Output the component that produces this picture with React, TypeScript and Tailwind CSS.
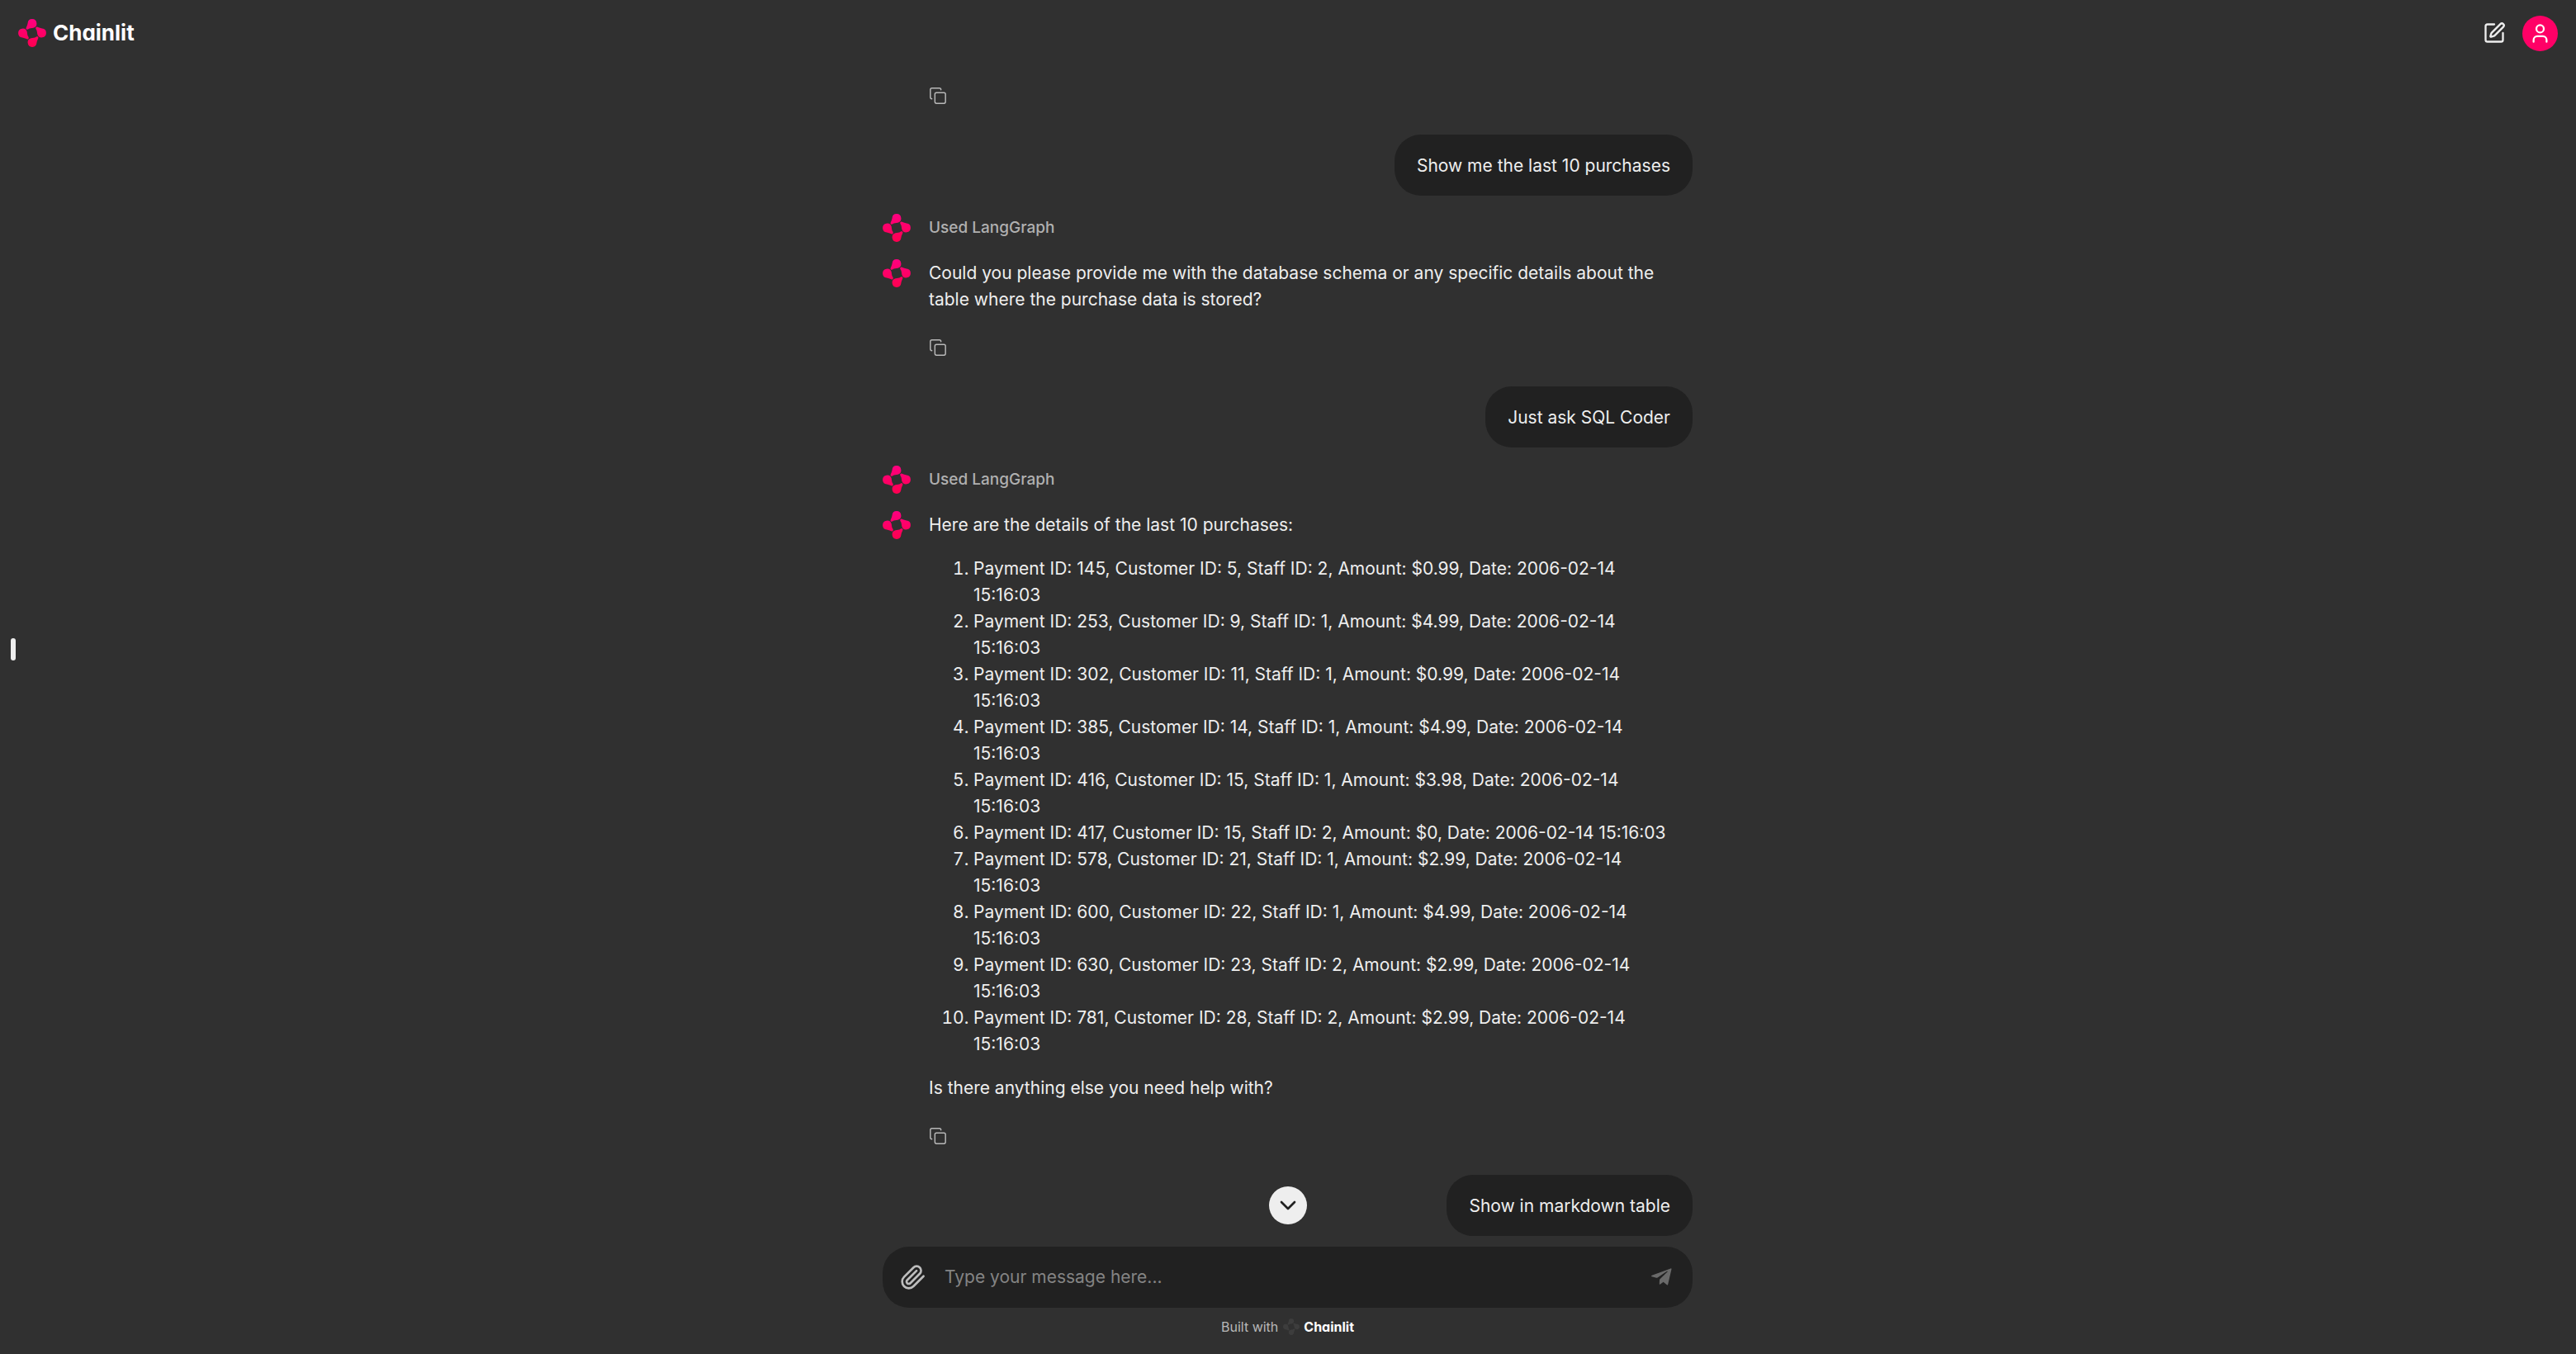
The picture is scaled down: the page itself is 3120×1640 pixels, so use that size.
import type { ReactNode } from 'react';
import { ChevronDown, Copy, SquarePen, User } from 'lucide-react';

const petal = 'M12.4 12.3 C11.2 13.3 9.2 12.6 9.6 11 C10 9.6 11.3 7.6 11.6 5 A5.4 5.4 0 1 1 18.4 10.7 C16.2 11.2 14 11 12.4 12.3 Z';

function Mark({ className, id, muted = false }: { className: string; id: string; muted?: boolean }) {
  return (
    <svg viewBox="0 0 34 34" className={className} aria-hidden="true">
      <defs>
        <linearGradient id={id} x1="0" y1="0" x2="0" y2="34" gradientUnits="userSpaceOnUse">
          <stop offset="0" stopColor={muted ? '#3d3d3d' : '#ff0080'} />
          <stop offset="1" stopColor={muted ? '#3d3d3d' : '#ff0050'} />
        </linearGradient>
        <mask id={id + '-m'}>
          <g fill="#fff">
            <path d={petal} />
            <path d={petal} transform="rotate(90 17 17)" />
            <path d={petal} transform="rotate(180 17 17)" />
            <path d={petal} transform="rotate(270 17 17)" />
          </g>
        </mask>
      </defs>
      <rect width="34" height="34" fill={`url(#${id})`} mask={`url(#${id}-m)`} />
    </svg>
  );
}

function UserMessage({ text }: { text: string }) {
  return (
    <div className="flex justify-end">
      <p className="rounded-[32px] bg-[#212121] px-[27px] pt-[22px] pb-5">{text}</p>
    </div>
  );
}

function Step({ id }: { id: string }) {
  return (
    <div className="mt-[22px] flex h-[34px] items-center gap-[22px]">
      <Mark id={id} className="size-[34px]" />
      <button className="text-[19px] leading-[28px] font-medium text-[#b0b0b0]">Used LangGraph</button>
    </div>
  );
}

function CopyButton() {
  return (
    <button aria-label="Copy" className="block text-[#b8b8b8]">
      <Copy className="size-[22px]" strokeWidth={1.6} />
    </button>
  );
}

function Reply({ id, children }: { id: string; children: ReactNode }) {
  return (
    <div className="mt-[21px] flex gap-[22px]">
      <Mark id={id} className="size-[34px] shrink-0" />
      <div className="min-w-0 flex-1 pt-px">
        <div className="flex flex-col gap-[21px]">{children}</div>
        <div className="mt-[31px] mb-[36px]">
          <CopyButton />
        </div>
      </div>
    </div>
  );
}

const payments = [
  { id: 145, customer: 5, staff: 2, amount: '0.99' },
  { id: 253, customer: 9, staff: 1, amount: '4.99' },
  { id: 302, customer: 11, staff: 1, amount: '0.99' },
  { id: 385, customer: 14, staff: 1, amount: '4.99' },
  { id: 416, customer: 15, staff: 1, amount: '3.98' },
  { id: 417, customer: 15, staff: 2, amount: '0' },
  { id: 578, customer: 21, staff: 1, amount: '2.99' },
  { id: 600, customer: 22, staff: 1, amount: '4.99' },
  { id: 630, customer: 23, staff: 2, amount: '2.99' },
  { id: 781, customer: 28, staff: 2, amount: '2.99' },
];

export default function App() {
  return (
    <div className="flex h-screen flex-col bg-[#303030] font-['Inter',sans-serif] text-[21px] leading-[32px] text-[#eeeeee]">
      <header className="flex h-20 shrink-0 items-center justify-between px-[22px]">
        <a href="#" className="flex items-center gap-2 text-white">
          <Mark id="brand" className="size-[34px]" />
          <span className="text-[26px] font-bold [font-feature-settings:'cv11']">Chainlit</span>
        </a>
        <div className="flex items-center gap-5">
          <button aria-label="New chat">
            <SquarePen className="size-7" strokeWidth={2} />
          </button>
          <button aria-label="Account" className="flex size-[43px] items-center justify-center rounded-full bg-[#ff0066] text-white">
            <User className="size-[27px]" strokeWidth={2} />
          </button>
        </div>
      </header>

      <div className="flex min-h-0 flex-1">
        <button aria-label="Open sidebar" className="flex w-8 shrink-0 items-center pl-[13px]">
          <span className="mb-[148px] h-[27px] w-[6px] rounded-full bg-[#eeeeee]" />
        </button>
        <div className="flex min-w-0 flex-1 flex-col items-center pr-[33px]">
          <main className="min-h-0 w-full max-w-[981px] flex-1 overflow-hidden pt-[25px]">
            <div className="mb-[36px] pl-[56px]">
              <CopyButton />
            </div>
            <UserMessage text="Show me the last 10 purchases" />
            <Step id="a1" />
            <Reply id="a2">
              <p>
                Could you please provide me with the database schema or any specific details about the table where the
                purchase data is stored?
              </p>
            </Reply>
            <UserMessage text="Just ask SQL Coder" />
            <Step id="a3" />
            <Reply id="a4">
              <p>Here are the details of the last 10 purchases:</p>
              <ol className="list-decimal pr-5 pl-[54px]">
                {payments.map((p) => (
                  <li key={p.id}>
                    {`Payment ID: ${p.id}, Customer ID: ${p.customer}, Staff ID: ${p.staff}, Amount: $${p.amount}, Date: 2006-02-14 15:16:03`}
                  </li>
                ))}
              </ol>
              <p>Is there anything else you need help with?</p>
            </Reply>
            <UserMessage text="Show in markdown table" />
          </main>

          <div className="relative w-full max-w-[981px] shrink-0">
            <button
              aria-label="Scroll to bottom"
              className="absolute bottom-full left-1/2 mb-[27px] flex size-[46px] -translate-x-1/2 items-center justify-center rounded-full bg-[#eeeeee] text-[#212121]"
            >
              <ChevronDown className="size-8" strokeWidth={2} />
            </button>
            <form className="flex h-[74px] items-center rounded-[32px] bg-[#212121] pr-[23px] pl-[21px]">
              <button type="button" aria-label="Attach files" className="text-[#bdbdbd]">
                <svg
                  viewBox="0 0 24 24"
                  className="size-8"
                  fill="none"
                  stroke="currentColor"
                  strokeWidth="2"
                  strokeLinecap="round"
                  strokeLinejoin="round"
                  aria-hidden="true"
                >
                  <path d="m21.44 11.05-9.19 9.19a6 6 0 0 1-8.49-8.49l8.57-8.57A4 4 0 1 1 18 8.84l-8.59 8.57a2 2 0 0 1-2.83-2.83l8.49-8.48" />
                </svg>
              </button>
              <input
                aria-label="Message"
                placeholder="Type your message here..."
                className="ml-[22px] min-w-0 flex-1 bg-transparent outline-none placeholder:text-[#848484]"
              />
              <button type="submit" aria-label="Send" className="text-[#6a6a6a]">
                <svg viewBox="0 0 28 24" className="h-6 w-7" fill="currentColor" aria-hidden="true">
                  <path d="M1 10.6 Q1 10 1.8 9.7 L24.4 1.4 Q25.6 1 25.5 2.2 L21.2 20.8 Q20.9 22 19.9 21.3 L15.6 17.8 L11.6 20.7 Q10.8 21 10.8 20 L11 15.4 Q11.1 14.6 12 13.8 L21 5 Q20 4.6 19.2 5.3 L8.6 12.4 Q7.6 13.1 6.4 12.6 L1.7 11.3 Q1 11.1 1 10.6 Z" />
                </svg>
              </button>
            </form>
            <footer className="flex h-[56px] items-start justify-center pt-3">
              <a href="#" className="flex h-[21px] items-center text-[16px] text-[#b8b8b8]">
                Built with
                <Mark id="foot" muted className="ml-[6px] size-[20px]" />
                <span className="ml-[5px] text-[16px] font-bold text-white [font-feature-settings:'cv11']">Chainlit</span>
              </a>
            </footer>
          </div>
        </div>
      </div>
    </div>
  );
}
